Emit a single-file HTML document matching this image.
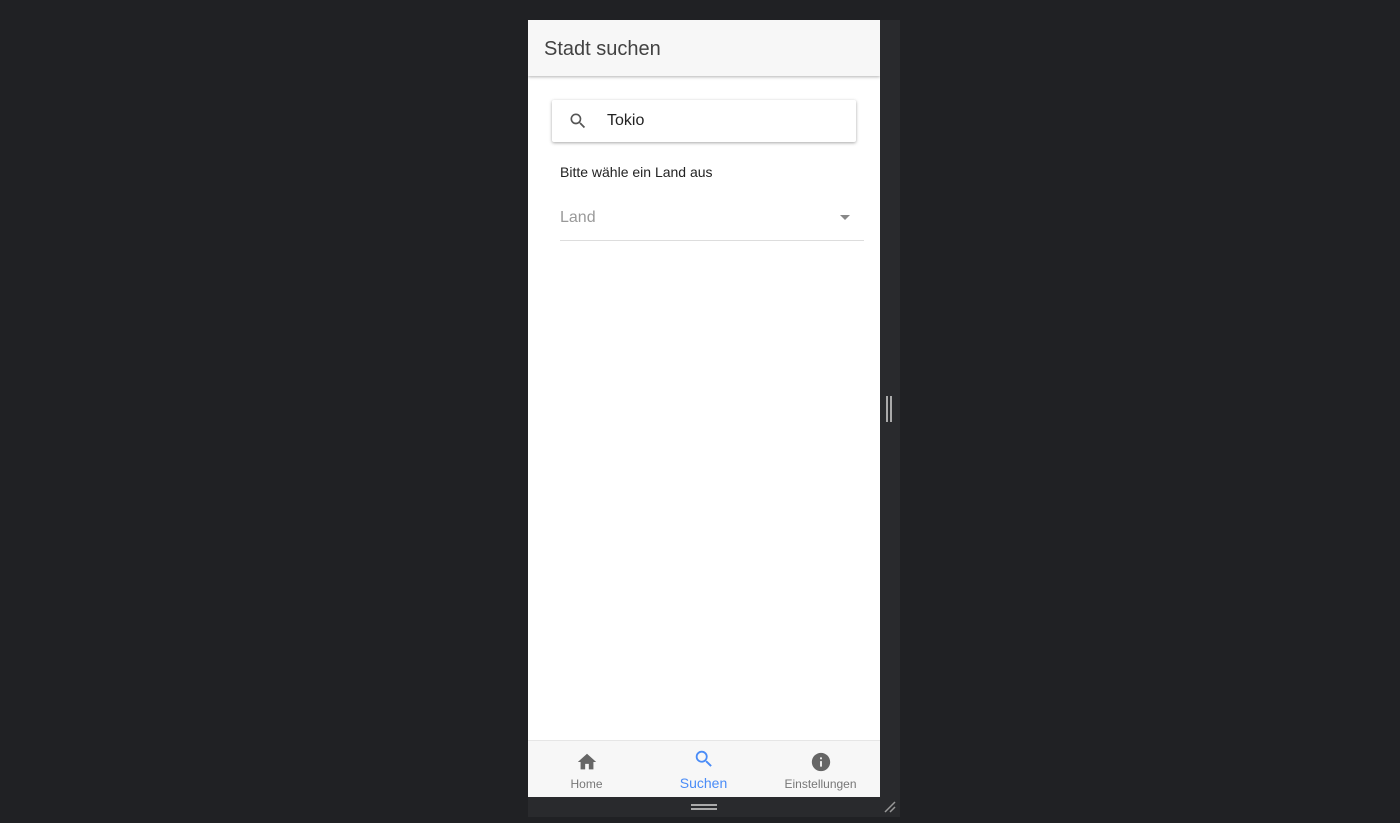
<!DOCTYPE html>
<html><head><style>
*{margin:0;padding:0;box-sizing:border-box}
body{width:1400px;height:823px;background:#202124;font-family:"Liberation Sans",sans-serif;position:relative;overflow:hidden}
.frame{position:absolute;left:528px;top:20px;width:372px;height:797px;background:#292a2d}
.app{position:absolute;left:528px;top:20px;width:352px;height:777px;background:#fff;overflow:hidden}
.hdr{height:56px;background:#f7f7f7;box-shadow:0 1px 3px rgba(0,0,0,.3);position:relative;z-index:1}
.hdr span{position:absolute;left:16px;top:18px;font-size:20px;color:#424242}
.search{position:absolute;left:24px;top:80px;width:304px;height:42px;background:#fff;box-shadow:0 1px 3px rgba(0,0,0,.35);border-radius:2px}
.search svg{position:absolute;left:16px;top:11px}
.search span{position:absolute;left:55px;top:12px;font-size:16px;color:#222}
.lbl{position:absolute;left:32px;top:144px;font-size:14px;color:#222}
.land{position:absolute;left:32px;top:189px;font-size:16px;color:#999}
.arrow{position:absolute;left:312px;top:195px;width:0;height:0;border-left:5px solid transparent;border-right:5px solid transparent;border-top:5px solid #888}
.line{position:absolute;left:32px;top:220px;width:304px;height:1px;background:#ddd}
.nav{position:absolute;left:0;top:720px;width:352px;height:57px;background:#f7f7f7;border-top:1px solid #e6e6e6}
.it{position:absolute;top:0;width:117px;text-align:center;font-size:12px;color:#777}
.it svg{position:absolute;top:10px;left:48px}
.it span{position:absolute;top:36px;left:0;width:100%}
</style></head><body>
<div class="frame"></div>
<div class="app">
<div class="hdr"><span>Stadt suchen</span></div>
<div class="search"><svg width="20" height="20" viewBox="0 0 24 24"><path fill="#555" d="M15.5 14h-.79l-.28-.27A6.47 6.47 0 0 0 16 9.5 6.5 6.5 0 1 0 9.5 16c1.610 0 3.09-.59 4.23-1.57l.27.28v.79l5 4.99L20.49 19l-4.99-5zm-6 0C7.01 14 5 11.990 5 9.5S7.01 5 9.5 5 14 7.01 14 9.5 11.99 14 9.5 14z"/></svg><span>Tokio</span></div>
<div class="lbl">Bitte wähle ein Land aus</div>
<div class="land">Land</div>
<div class="arrow"></div>
<div class="line"></div>
<div class="nav">
<div class="it" style="left:0"><svg width="22" height="22" viewBox="0 0 24 24"><path fill="#666" d="M10 20v-6h4v6h5v-8h3L12 3 2 12h3v8z"/></svg><span>Home</span></div>
<div class="it" style="left:117px;color:#4a8cf7;font-size:14px"><svg width="22" height="22" viewBox="0 0 24 24" style="top:7px"><path fill="#4a8cf7" d="M15.5 14h-.79l-.28-.27A6.47 6.47 0 0 0 16 9.5 6.5 6.5 0 1 0 9.5 16c1.61 0 3.09-.59 4.23-1.57l.27.28v.79l5 4.99L20.49 19l-4.99-5zm-6 0C7.01 14 5 11.99 5 9.5S7.01 5 9.5 5 14 7.01 14 9.5 11.99 14 9.5 14z"/></svg><span style="top:34px">Suchen</span></div>
<div class="it" style="left:234px"><svg width="22" height="22" viewBox="0 0 24 24"><path fill="#666" d="M12 2C6.48 2 2 6.48 2 12s4.48 10 10 10 10-4.48 10-10S17.52 2 12 2zm1 15h-2v-6h2v6zm0-8h-2V7h2v2z"/></svg><span>Einstellungen</span></div>
</div>
</div>
<div style="position:absolute;left:886px;top:396px;width:2px;height:26px;background:#aaa"></div>
<div style="position:absolute;left:890px;top:396px;width:2px;height:26px;background:#aaa"></div>
<div style="position:absolute;left:691px;top:804px;width:26px;height:2px;background:#aaa"></div>
<div style="position:absolute;left:691px;top:808px;width:26px;height:2px;background:#aaa"></div>
<svg style="position:absolute;left:883px;top:800px" width="14" height="14"><path d="M2 12L12 2M7 12L12 7" stroke="#999" stroke-width="1.5"/></svg>
</body></html>
